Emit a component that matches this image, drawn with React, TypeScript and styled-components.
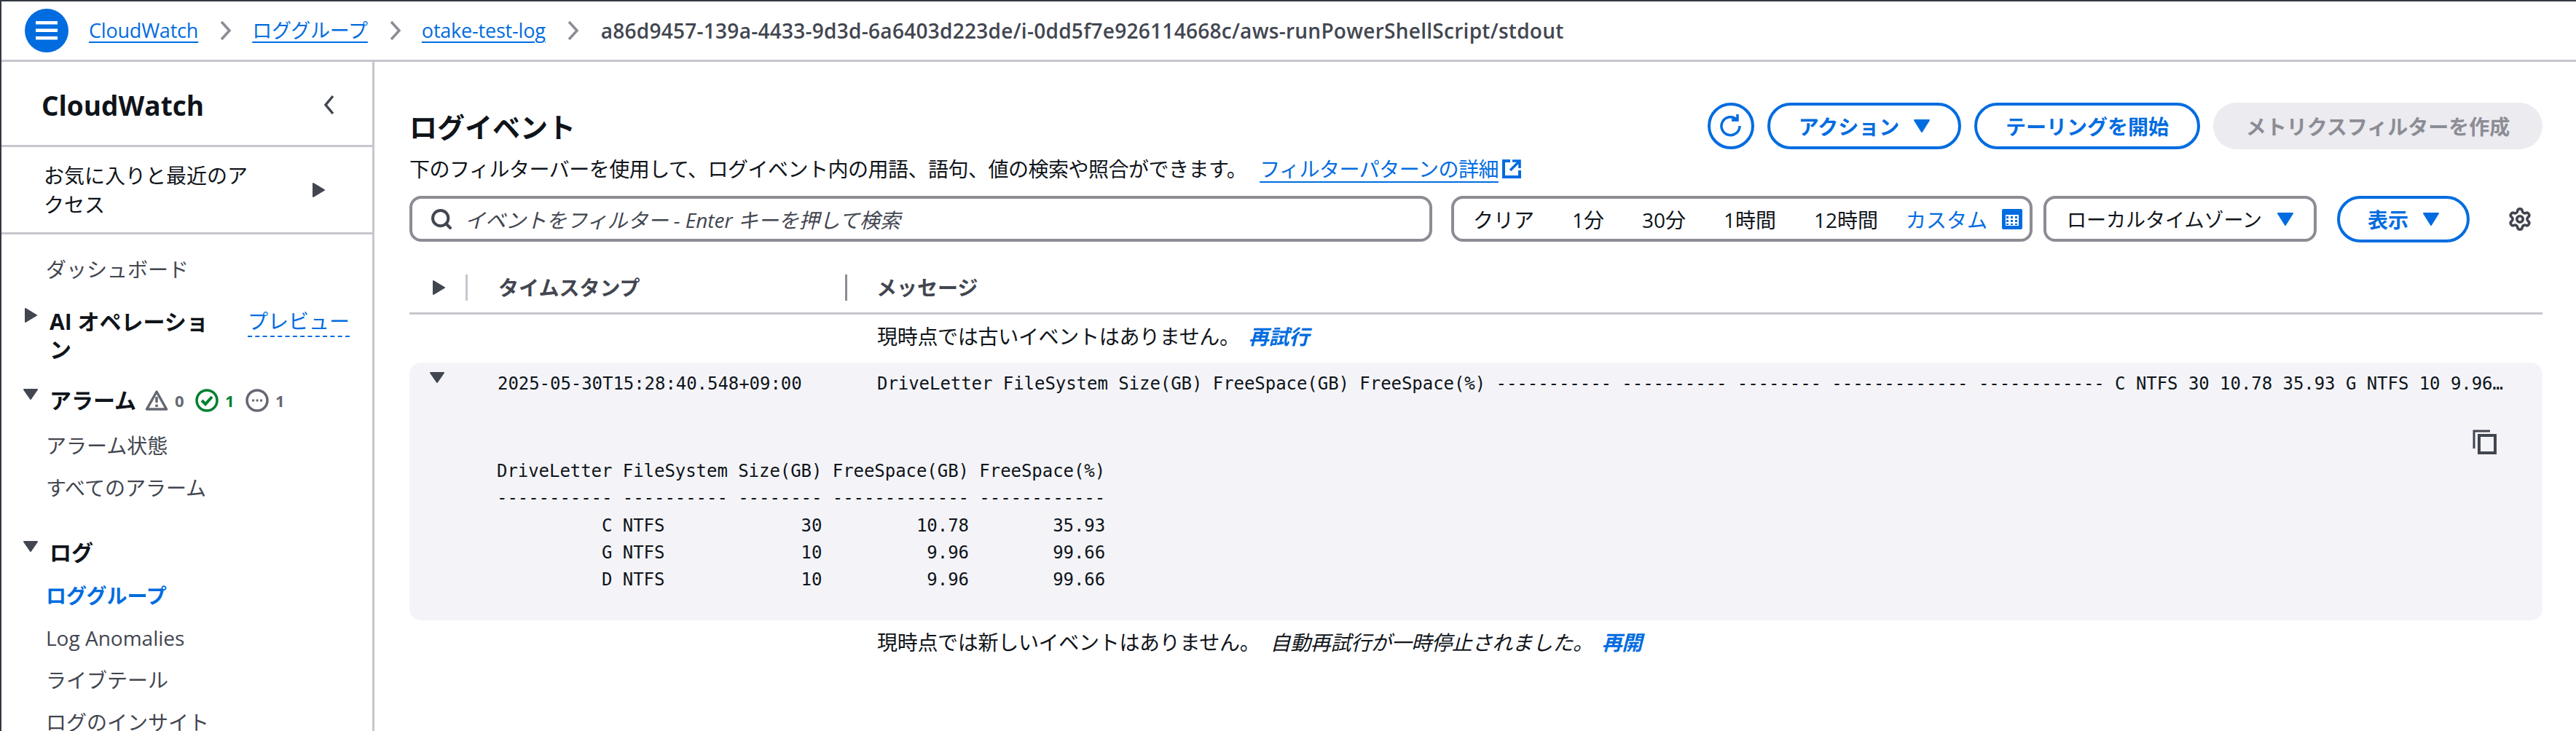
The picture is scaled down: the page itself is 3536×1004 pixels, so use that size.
import styled, { createGlobalStyle } from 'styled-components';
import { Search, Settings } from 'lucide-react';

const BLUE = '#006ce0';
const INK = '#0f141a';
const GREY = '#424650';
const FONT = `"Open Sans", "Noto Sans CJK JP", sans-serif`;
const MONO = `"DejaVu Sans Mono", "Noto Sans CJK JP", monospace`;

const GlobalStyle = createGlobalStyle`
  html, body { margin: 0; padding: 0; background: #fff; }
  body { font-family: ${FONT}; font-size: 28px; color: ${INK}; }
  * { box-sizing: border-box; }
`;

const Page = styled.div`
  width: 3536px;
  height: 1004px;
  overflow: hidden;
  display: flex;
  flex-direction: column;
  border-top: 2px solid #333843;
  border-left: 2px solid #333843;
`;

const TopBar = styled.header`
  height: 83px;
  flex: none;
  display: flex;
  align-items: center;
  padding-left: 32px;
  border-bottom: 3px solid #c6c6cd;
`;

const MenuButton = styled.span`
  width: 60px;
  height: 60px;
  border-radius: 50%;
  background: ${BLUE};
  display: flex;
  align-items: center;
  justify-content: center;
  margin-right: 28px;
`;

const Crumb = styled.a`
  color: ${BLUE};
  font-size: 27px;
  line-height: 36px;
  text-decoration: underline;
  text-decoration-thickness: 2px;
  text-underline-offset: 5px;
  letter-spacing: -0.2px;
`;

const CrumbCurrent = styled.span`
  color: ${GREY};
  font-size: 28px;
  font-weight: 600;
  letter-spacing: 0.27px;
  margin-left: 2px;
`;

const CrumbSep = styled.svg`
  width: 16px;
  height: 28px;
  margin: 0 28px 0 30px;
  flex: none;
`;

const Body = styled.div`
  flex: 1;
  display: flex;
  min-height: 0;
`;

const Sidebar = styled.nav`
  width: 512px;
  flex: none;
  border-right: 3px solid #c6c6cd;
  overflow: hidden;
`;

const SideHead = styled.div`
  height: 117px;
  display: flex;
  align-items: center;
  justify-content: space-between;
  padding: 4px 50px 0 55px;
  border-bottom: 3px solid #c6c6cd;
`;

const SideTitle = styled.div`
  font-size: 37px;
  font-weight: 700;
`;

const Favourites = styled.div`
  height: 120px;
  display: flex;
  align-items: center;
  justify-content: space-between;
  padding: 0 64px 0 58px;
  border-bottom: 3px solid #c6c6cd;
  font-size: 28px;
  line-height: 40px;
`;

const FavText = styled.div`
  width: 290px;
`;

const NavList = styled.div`
  display: flex;
  flex-direction: column;
  padding-top: 24px;
`;

const NavLink = styled.div<{ $active?: boolean }>`
  height: 58px;
  line-height: 48px;
  padding-left: 61px;
  font-size: 28px;
  color: ${(p) => (p.$active ? BLUE : GREY)};
  font-weight: ${(p) => (p.$active ? 700 : 400)};
`;

const NavSection = styled.div<{ $gap?: number; $after?: number }>`
  display: flex;
  align-items: flex-start;
  padding-left: 30px;
  margin-top: ${(p) => p.$gap ?? 0}px;
  margin-bottom: ${(p) => p.$after ?? 0}px;
`;

const Caret = styled.svg`
  width: 20px;
  height: 20px;
  flex: none;
  fill: ${GREY};
`;

const SectionTitle = styled.div`
  font-size: 30px;
  line-height: 38px;
  font-weight: 700;
  margin-left: 16px;
`;

const AiTitle = styled(SectionTitle)`
  width: 272px;
  padding-right: 30px;
`;

const PreviewLink = styled.span`
  color: ${BLUE};
  font-size: 28px;
  line-height: 36px;
  border-bottom: 2px dashed ${BLUE};
  height: 40px;
`;

const Status = styled.div`
  display: flex;
  align-items: center;
  gap: 9px;
  margin-left: 12px;
  height: 38px;
`;

const StatusCount = styled.span<{ $ok?: boolean }>`
  font-size: 22px;
  font-weight: 700;
  width: 19px;
  color: ${(p) => (p.$ok ? '#00802f' : '#656871')};
`;

const Main = styled.main`
  flex: 1;
  min-width: 0;
  padding: 56px 46px 0 48px;
`;

const TitleRow = styled.div`
  display: flex;
  align-items: center;
  justify-content: space-between;
  height: 64px;
`;

const PageTitle = styled.h1`
  margin: -2px 0 0;
  font-size: 38px;
  font-weight: 700;
`;

const ButtonRow = styled.div`
  display: flex;
  gap: 18px;
`;

const PillButton = styled.button<{ $w: number; $ml?: number }>`
  width: ${(p) => p.$w}px;
  height: 64px;
  margin-left: ${(p) => p.$ml ?? 0}px;
  border: 4px solid ${BLUE};
  border-radius: 32px;
  background: #fff;
  color: ${BLUE};
  font-family: ${FONT};
  font-size: 28px;
  font-weight: 700;
  display: flex;
  align-items: center;
  justify-content: center;
  gap: 20px;
  padding: 0;
  flex: none;
`;

const DisabledButton = styled(PillButton)`
  border: none;
  background: #ebebf0;
  color: #8c8c94;
`;

const DownTriangle = styled.svg`
  width: 22px;
  height: 18px;
  fill: ${BLUE};
  flex: none;
`;

const Description = styled.p`
  margin: 7px 0 0;
  line-height: 40px;
  font-size: 28px;
  letter-spacing: -0.5px;
  display: flex;
  align-items: center;
`;

const DocLink = styled.a`
  color: ${BLUE};
  margin-left: 18px;
  text-decoration: underline;
  text-decoration-thickness: 2px;
  text-underline-offset: 6px;
`;

const ExternalIcon = styled.svg`
  width: 28px;
  height: 28px;
  margin-left: 4px;
  flex: none;
`;

const FilterRow = styled.div`
  display: flex;
  align-items: center;
  margin-top: 17px;
  height: 63px;
`;

const Field = styled.div<{ $w: number; $ml?: number }>`
  width: ${(p) => p.$w}px;
  height: 63px;
  margin-left: ${(p) => p.$ml ?? 0}px;
  border: 4px solid #8c8c94;
  border-radius: 16px;
  display: flex;
  align-items: center;
  flex: none;
`;

const SearchField = styled(Field)`
  padding-left: 24px;
  gap: 16px;
`;

const Placeholder = styled.span`
  font-style: italic;
  color: ${GREY};
  font-size: 28px;
`;

const RangeField = styled(Field)`
  padding-left: 26px;
  gap: 52px;
  font-size: 28px;
`;

const RangeCustom = styled.span`
  color: ${BLUE};
  display: flex;
  align-items: center;
  gap: 20px;
  margin-left: -14px;
`;

const ZoneField = styled(Field)`
  padding: 0 28px;
  justify-content: space-between;
  font-size: 27px;
`;

const GearBox = styled.span`
  margin-left: 52px;
  display: flex;
  color: ${GREY};
`;

const TableGrid = styled.div`
  display: grid;
  grid-template-columns: 77px 521px 1fr;
`;

const HeadRow = styled(TableGrid)`
  margin-top: 27px;
  height: 73px;
  padding-top: 18px;
  border-bottom: 3px solid #c6c6cd;
  align-items: start;
`;

const HeadCell = styled.div<{ $strong?: boolean }>`
  height: 36px;
  line-height: 36px;
  font-size: 28px;
  font-weight: 600;
  color: ${GREY};
  padding-left: ${(p) => (p.$strong ? 40 : 42)}px;
  border-left: 3px solid ${(p) => (p.$strong ? '#8c8c94' : '#c6c6cd')};
`;

const HeadCaret = styled.div`
  display: flex;
  align-items: center;
  justify-content: flex-end;
  height: 36px;
  padding-right: 27px;
`;

const Notice = styled.div`
  height: 66px;
  line-height: 60px;
  padding-left: 642px;
  font-size: 28px;
  letter-spacing: -0.3px;
`;

const LinkEm = styled.em`
  color: ${BLUE};
  font-weight: 700;
  margin-left: 12px;
`;

const PlainEm = styled.em`
  margin-left: 14px;
`;

const EventPanel = styled.section`
  background: #f4f4f8;
  border-radius: 16px;
  height: 354px;
  position: relative;
  font-family: ${MONO};
  font-size: 24px;
  letter-spacing: -0.05px;
`;

const EventRow = styled(TableGrid)`
  padding-top: 11px;
  height: 131px;
`;

const EventCaret = styled.div`
  margin-top: -3px;
  padding-left: 28px;
`;

const Stamp = styled.div`
  padding-left: 44px;
  line-height: 36px;
`;

const Message = styled.div`
  padding: 0 44px;
  line-height: 36px;
  white-space: nowrap;
  overflow: hidden;
  text-overflow: ellipsis;
`;

const Output = styled.pre`
  margin: 0;
  padding-left: 120px;
  font: inherit;
  line-height: 37.25px;
`;

const CopyButton = styled.svg`
  position: absolute;
  top: 92px;
  right: 62px;
  width: 34px;
  height: 34px;
`;

const OUTPUT = `DriveLetter FileSystem Size(GB) FreeSpace(GB) FreeSpace(%)
----------- ---------- -------- ------------- ------------
          C NTFS             30         10.78        35.93
          G NTFS             10          9.96        99.66
          D NTFS             10          9.96        99.66`;

const MESSAGE = 'DriveLetter FileSystem Size(GB) FreeSpace(GB) FreeSpace(%) ----------- ---------- -------- ------------- ------------ C NTFS 30 10.78 35.93 G NTFS 10 9.96 99.66 D NTFS 10 9.96 99.66';

function Down() {
  return (
    <DownTriangle viewBox="0 0 22 18">
      <path d="M1 1h20L11 17z" stroke={BLUE} strokeWidth="2" strokeLinejoin="round" />
    </DownTriangle>
  );
}

function Separator() {
  return (
    <CrumbSep viewBox="0 0 16 28" fill="none" stroke="#8c8c94" strokeWidth="3.5">
      <path d="M2 2l11 12L2 26" />
    </CrumbSep>
  );
}

function CaretRight() {
  return (
    <Caret viewBox="0 0 20 20">
      <path d="M3 1l15 9-15 9z" stroke={GREY} strokeWidth="2" strokeLinejoin="round" />
    </Caret>
  );
}

function CaretDown() {
  return (
    <Caret viewBox="0 0 20 20">
      <path d="M1 4h18l-9 13z" stroke={GREY} strokeWidth="2" strokeLinejoin="round" />
    </Caret>
  );
}

function Breadcrumbs() {
  return (
    <TopBar>
      <MenuButton>
        <svg width="32" height="28" viewBox="0 0 32 28" fill="#fff">
          <rect x="1" y="1" width="30" height="4.5" />
          <rect x="1" y="11.5" width="30" height="4.5" />
          <rect x="1" y="22" width="30" height="4.5" />
        </svg>
      </MenuButton>
      <Crumb>CloudWatch</Crumb>
      <Separator />
      <Crumb>ロググループ</Crumb>
      <Separator />
      <Crumb>otake-test-log</Crumb>
      <Separator />
      <CrumbCurrent>a86d9457-139a-4433-9d3d-6a6403d223de/i-0dd5f7e926114668c/aws-runPowerShellScript/stdout</CrumbCurrent>
    </TopBar>
  );
}

function AlarmStatus() {
  return (
    <Status>
      <svg width="32" height="30" viewBox="0 0 32 30" fill="none" stroke="#656871" strokeWidth="3.5">
        <path d="M16 3L2.5 27h27z" strokeLinejoin="round" />
        <path d="M16 10v8M16 20.5v3.5" />
      </svg>
      <StatusCount>0</StatusCount>
      <svg width="32" height="32" viewBox="0 0 32 32" fill="none" stroke="#00802f" strokeWidth="3.5">
        <circle cx="16" cy="16" r="14" />
        <path d="M9 16l5 5 9-10" strokeWidth="4" />
      </svg>
      <StatusCount $ok>1</StatusCount>
      <svg width="32" height="32" viewBox="0 0 32 32" fill="none" stroke="#656871" strokeWidth="3.5">
        <circle cx="16" cy="16" r="14" />
        <path d="M9 16h14" strokeDasharray="3 2.5" strokeWidth="3" />
      </svg>
      <StatusCount>1</StatusCount>
    </Status>
  );
}

function SideNav() {
  return (
    <Sidebar>
      <SideHead>
        <SideTitle>CloudWatch</SideTitle>
        <svg width="18" height="28" viewBox="0 0 18 28" fill="none" stroke={GREY} strokeWidth="3.5">
          <path d="M14 2L4 14l10 12" />
        </svg>
      </SideHead>
      <Favourites>
        <FavText>お気に入りと最近のアクセス</FavText>
        <CaretRight />
      </Favourites>
      <NavList>
        <NavLink>ダッシュボード</NavLink>
        <NavSection $gap={19}>
          <CaretRight />
          <AiTitle>AI オペレーション</AiTitle>
          <PreviewLink>プレビュー</PreviewLink>
        </NavSection>
        <NavSection $gap={32} $after={19}>
          <CaretDown />
          <SectionTitle>アラーム</SectionTitle>
          <AlarmStatus />
        </NavSection>
        <NavLink>アラーム状態</NavLink>
        <NavLink>すべてのアラーム</NavLink>
        <NavSection $gap={36} $after={16}>
          <CaretDown />
          <SectionTitle>ログ</SectionTitle>
        </NavSection>
        <NavLink $active>ロググループ</NavLink>
        <NavLink>Log Anomalies</NavLink>
        <NavLink>ライブテール</NavLink>
        <NavLink>ログのインサイト</NavLink>
      </NavList>
    </Sidebar>
  );
}

function Toolbar() {
  return (
    <>
      <TitleRow>
        <PageTitle>ログイベント</PageTitle>
        <ButtonRow>
          <PillButton $w={64}>
            <svg width="36" height="36" viewBox="0 0 36 36" fill="none" stroke={BLUE} strokeWidth="3.5">
              <path d="M26 9a12.5 12.5 0 1 0 4 9" />
              <path d="M27 2v8h-8" />
            </svg>
          </PillButton>
          <PillButton $w={266}>アクション<Down /></PillButton>
          <PillButton $w={310}>テーリングを開始</PillButton>
          <DisabledButton $w={452}>メトリクスフィルターを作成</DisabledButton>
        </ButtonRow>
      </TitleRow>
      <Description>
        下のフィルターバーを使用して、ログイベント内の用語、語句、値の検索や照合ができます。
        <DocLink>フィルターパターンの詳細</DocLink>
        <ExternalIcon viewBox="0 0 28 28" fill="none" stroke={BLUE} strokeWidth="4">
          <path d="M12 3H3v22h22v-9" />
          <path d="M12 16L25 3M15 3h10v10" strokeWidth="3.5" />
        </ExternalIcon>
      </Description>
      <FilterRow>
        <SearchField $w={1404}>
          <Search size={32} color={GREY} strokeWidth={3} />
          <Placeholder>イベントをフィルター - Enter キーを押して検索</Placeholder>
        </SearchField>
        <RangeField $w={798} $ml={26}>
          <span>クリア</span>
          <span>1分</span>
          <span>30分</span>
          <span>1時間</span>
          <span>12時間</span>
          <RangeCustom>
            カスタム
            <svg width="28" height="28" viewBox="0 0 28 28">
              <rect width="28" height="28" rx="2" fill={BLUE} />
              <path d="M5 8h18v15H5z" fill="#fff" />
              <path d="M6 10h3v3H6zM12 10h3v3h-3zM18 10h3v3h-3zM6 15h3v3H6zM12 15h3v3h-3zM18 15h3v3h-3zM6 20h3v2H6zM12 20h3v2h-3zM18 20h3v2h-3z" fill={BLUE} />
            </svg>
          </RangeCustom>
        </RangeField>
        <ZoneField $w={375} $ml={15}>
          ローカルタイムゾーン
          <Down />
        </ZoneField>
        <PillButton $w={182} $ml={28}>表示<Down /></PillButton>
        <GearBox>
          <Settings size={34} strokeWidth={2.6} />
        </GearBox>
      </FilterRow>
    </>
  );
}

function EventTable() {
  return (
    <>
      <HeadRow>
        <HeadCaret><CaretRight /></HeadCaret>
        <HeadCell>タイムスタンプ</HeadCell>
        <HeadCell $strong>メッセージ</HeadCell>
      </HeadRow>
      <Notice>
        現時点では古いイベントはありません。<LinkEm>再試行</LinkEm>
      </Notice>
      <EventPanel>
        <EventRow>
          <EventCaret><CaretDown /></EventCaret>
          <Stamp>2025-05-30T15:28:40.548+09:00</Stamp>
          <Message>{MESSAGE}</Message>
        </EventRow>
        <Output>{OUTPUT}</Output>
        <CopyButton viewBox="0 0 34 34" fill="none" stroke={GREY}>
          <path d="M2 26V2h22" strokeWidth="3" />
          <rect x="9" y="8" width="22" height="24" strokeWidth="4" />
        </CopyButton>
      </EventPanel>
      <Notice>
        現時点では新しいイベントはありません。
        <PlainEm>自動再試行が一時停止されました。</PlainEm>
        <LinkEm>再開</LinkEm>
      </Notice>
    </>
  );
}

export default function App() {
  return (
    <Page>
      <GlobalStyle />
      <Breadcrumbs />
      <Body>
        <SideNav />
        <Main>
          <Toolbar />
          <EventTable />
        </Main>
      </Body>
    </Page>
  );
}
